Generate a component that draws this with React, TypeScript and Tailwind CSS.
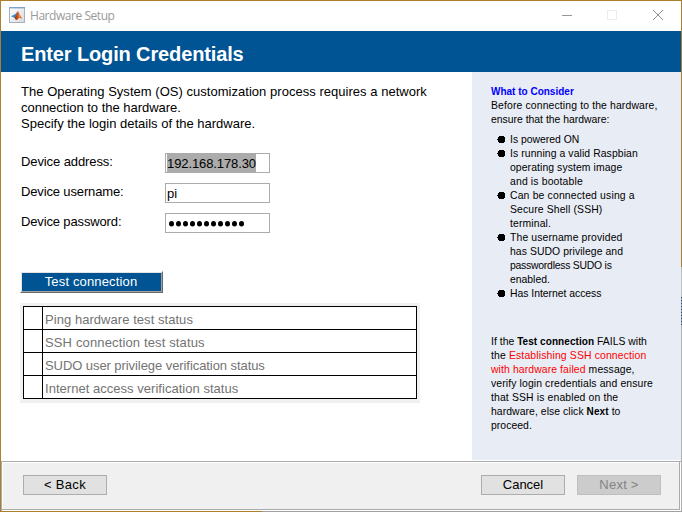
import type { ReactNode } from "react";

function MatlabIcon() {
  return (
    <svg width="16" height="16" viewBox="0 0 16 16" className="block">
      <defs>
        <linearGradient id="tile" x1="0" y1="0" x2="1" y2="1">
          <stop offset="0" stopColor="#ffffff" />
          <stop offset="1" stopColor="#d5d9df" />
        </linearGradient>
        <linearGradient id="peak" x1="0" y1="0" x2="1" y2="0">
          <stop offset="0" stopColor="#7a2415" />
          <stop offset="0.45" stopColor="#e2571c" />
          <stop offset="0.65" stopColor="#f08a2c" />
          <stop offset="1" stopColor="#a92612" />
        </linearGradient>
      </defs>
      <rect x="0.5" y="0.5" width="15" height="15" fill="url(#tile)" stroke="#a9b0b9" />
      <rect x="0" y="0" width="16" height="1.4" fill="#7fa3cb" />
      <path d="M2 9.2 L5.2 7.8 L7 6.6 L8.4 4.5 L7.6 9 L5.6 11 L4.3 10.2 Z" fill="#3f86bd" />
      <path d="M5.6 11 L7.2 8.6 L8.7 4 C9.6 4.2 10.8 8.6 13.2 11.8 C11.6 10.6 10.3 10.7 9 12 C8.2 13 7.6 13.2 7 12.9 Z" fill="url(#peak)" />
    </svg>
  );
}

function TitleBar() {
  return (
    <div className="flex h-[30px] shrink-0 items-start bg-white pl-2 text-[#999]">
      <div className="pt-[6px]">
        <MatlabIcon />
      </div>
      <div className="ml-[5px] mt-[7px] flex-1 whitespace-nowrap font-['Open_Sans','Noto_Sans',sans-serif] text-[12px] leading-4 tracking-[-0.45px]">
        Hardware Setup
      </div>
      <svg width="104" height="12" viewBox="0 0 104 12" className="mr-[16px] mt-[8px] block" fill="none" shapeRendering="crispEdges">
        <path d="M1 6.5h10" stroke="#999" />
        <rect x="46.5" y="1.5" width="9" height="9" stroke="#ececec" />
        <path d="M92 1l10 10M102 1l-10 10" stroke="#8f8f8f" shapeRendering="auto" />
      </svg>
    </div>
  );
}

function Field({ label, labelClass, children }: { label: string; labelClass: string; children: ReactNode }) {
  return (
    <div className="flex h-5">
      <div className={`w-36 pt-px leading-4 ${labelClass}`}>{label}</div>
      <div className="flex h-5 w-[105px] items-center border border-[#ababab] bg-white px-px">{children}</div>
    </div>
  );
}

const tests = [
  { text: "Ping hardware test status", spacing: "tracking-[0.05px]" },
  { text: "SSH connection test status", spacing: "tracking-[0.14px]" },
  { text: "SUDO user privilege verification status", spacing: "tracking-[-0.07px]" },
  { text: "Internet access verification status", spacing: "tracking-[0.03px]" },
];

function Bullet({ children }: { children: ReactNode }) {
  return (
    <li className="flex">
      <svg width="8" height="7" viewBox="0 0 8 7" className="mt-[3px] mr-[5px] block shrink-0" shapeRendering="crispEdges">
        <path d="M0 3h1v-2h1v-1h5v1h1v5h-1v1h-5v-1h-1v-2h-1z" />
      </svg>
      <div>{children}</div>
    </li>
  );
}

function Sidebar() {
  return (
    <aside className="h-[388px] w-[209px] shrink-0 whitespace-nowrap bg-[#e8ecf4] pl-[19px] pt-[13px] text-[10.4px] leading-[14px] text-black">
      <div className="text-[10px] font-bold leading-[14px] text-[#0000ff]">What to Consider</div>
      <div className="tracking-[0.14px]">Before connecting to the hardware,</div>
      <div>ensure that the hardware:</div>
      <ul className="mt-[6px] pl-[6px]">
        <Bullet>
          <div>Is powered ON</div>
        </Bullet>
        <Bullet>
          <div className="tracking-[0.09px]">Is running a valid Raspbian</div>
          <div className="tracking-[0.09px]">operating system image</div>
          <div className="tracking-[0.16px]">and is bootable</div>
        </Bullet>
        <Bullet>
          <div className="tracking-[0.17px]">Can be connected using a</div>
          <div className="tracking-[0.13px]">Secure Shell (SSH)</div>
          <div className="tracking-[0.13px]">terminal.</div>
        </Bullet>
        <Bullet>
          <div className="tracking-[0.13px]">The username provided</div>
          <div className="tracking-[0.07px]">has SUDO privilege and</div>
          <div className="tracking-[-0.23px]">passwordless SUDO is</div>
          <div>enabled.</div>
        </Bullet>
        <Bullet>
          <div className="tracking-[-0.02px]">Has Internet access</div>
        </Bullet>
      </ul>
      <div className="mt-[34px]">
        <div className="tracking-[0.02px]">
          If the <b className="text-[10px] tracking-[0.07px]">Test connection</b> FAILS with
        </div>
        <div className="tracking-[0.15px]">
          the <span className="text-[#ff0000]">Establishing SSH connection</span>
        </div>
        <div className="tracking-[0.11px]">
          <span className="text-[#ff0000]">with hardware failed</span> message,
        </div>
        <div className="tracking-[0.12px]">verify login credentials and ensure</div>
        <div className="tracking-[0.14px]">that SSH is enabled on the</div>
        <div className="tracking-[0.07px]">
          hardware, else click <b className="text-[10px] tracking-[0.1px]">Next</b> to
        </div>
        <div className="tracking-[0.05px]">proceed.</div>
      </div>
    </aside>
  );
}

const footerButton = "h-5 w-[84px] border text-center leading-[18px]";

export default function App() {
  return (
    <div className="flex h-[512px] w-[682px] overflow-hidden bg-[#b0b0b0] font-['Liberation_Sans',Arial,sans-serif] text-[13px] text-black">
      <div className="w-px shrink-0 bg-[#ae7f2a]" />
      <div className="flex w-[680px] shrink-0 flex-col bg-white">
        <div className="h-px shrink-0 bg-[#ae7f2a]" />
        <TitleBar />
        <header className="h-[41px] shrink-0 bg-[#005493] pl-5 pt-[11px]">
          <h1 className="whitespace-nowrap text-[20px] font-bold leading-6 tracking-[-0.13px] text-white">Enter Login Credentials</h1>
        </header>

        <div className="flex h-[389px] shrink-0">
          <main className="w-[471px] shrink-0 whitespace-nowrap pl-5 pt-[12px]">
            <div className="leading-4">
              <p className="tracking-[0.03px]">The Operating System (OS) customization process requires a network</p>
              <p className="tracking-[-0.02px]">connection to the hardware.</p>
              <p>Specify the login details of the hardware.</p>
            </div>

            <div className="mt-[21px] flex flex-col gap-[10px]">
              <Field label="Device address:" labelClass="tracking-[-0.1px]">
                <span className="h-[18px] bg-[#ababab] pt-[2px] leading-4 tracking-[-0.1px]">192.168.178.30</span>
              </Field>
              <Field label="Device username:" labelClass="tracking-[-0.14px]">
                <span className="pt-[2px] leading-4">pi</span>
              </Field>
              <Field label="Device password:" labelClass="tracking-[-0.14px]">
                <svg width="80" height="6" viewBox="0 0 80 6" className="ml-[2px] mt-[2px] block">
                  {Array.from({ length: 11 }, (_, i) => (
                    <ellipse key={i} cx={2.5 + i * 7} cy="2.7" rx="2.5" ry="2.7" />
                  ))}
                </svg>
              </Field>
            </div>

            <button className="-ml-px mt-[38px] block h-[22px] w-[143px] border border-b-[#696969] border-l-white border-r-[#696969] border-t-white">
              <span className="block h-5 border border-b-[#a0a0a0] border-l-[#e3e3e3] border-r-[#a0a0a0] border-t-[#e3e3e3] bg-[#005493] pr-px text-center leading-[18px] tracking-[0.15px] text-white">
                Test connection
              </span>
            </button>

            <div className="-ml-px mt-[10px] h-[100px] w-[400px] bg-[#f0f0f0] p-[3px]">
              <div className="flex w-[394px] flex-col border-t border-black">
                {tests.map((t) => (
                  <div key={t.text} className="flex h-[23px] border-b border-l border-r border-black bg-white">
                    <div className="w-[19px] border-r border-black" />
                    <div className={`pl-[2px] pt-[5px] leading-4 text-[#737373] ${t.spacing}`}>{t.text}</div>
                  </div>
                ))}
              </div>
            </div>
          </main>
          <Sidebar />
        </div>

        <footer className="h-[50px] shrink-0 border-l border-t border-[#ababab] bg-white">
          <div className="mr-px h-[48px] border-b border-r border-[#ababab] pl-px pt-px">
            <div className="flex h-[46px] items-start bg-[#f0f0f0] pl-5 pr-[18px] pt-[12px]">
              <button className={`${footerButton} border-[#adadad] bg-[#e1e1e1] tracking-[0.3px]`}>&lt; Back</button>
              <div className="flex-1" />
              <button className={`${footerButton} border-[#adadad] bg-[#e1e1e1]`}>Cancel</button>
              <button className={`${footerButton} ml-3 border-[#bfbfbf] bg-[#cccccc] tracking-[0.25px] text-[#838383]`}>Next &gt;</button>
            </div>
          </div>
        </footer>
        <div className="flex h-px shrink-0">
          <div className="w-[261px] bg-[#ae7f2a]" />
          <div className="flex-1 bg-[#a0a0a0]" />
        </div>
      </div>
      <div className="flex w-px shrink-0 flex-col">
        <div className="h-[267px] bg-[#ae7f2a]" />
        <div className="h-[30px] bg-[#c0c0c0]" />
        <div className="h-[28px] bg-[repeating-linear-gradient(#30455f_0_1px,#8fa0b3_1px_3px)]" />
        <div className="flex-1 bg-[#b0b0b0]" />
      </div>
    </div>
  );
}
